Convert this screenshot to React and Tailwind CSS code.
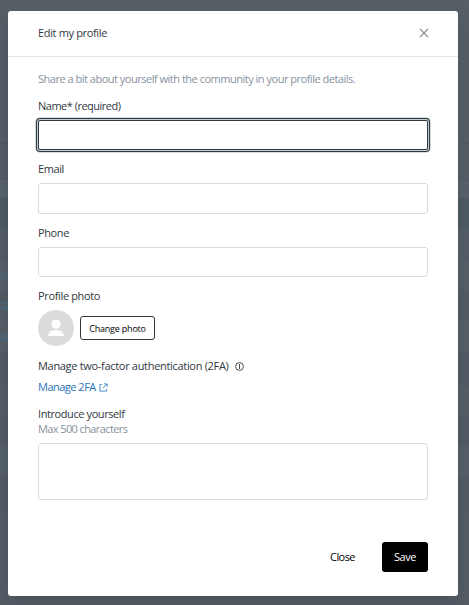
const FONT = "font-['Open_Sans','Noto_Sans',sans-serif]";

// Rows of the page that stay visible behind the dimmed overlay.
const rows = [
  { h: 'h-[143px]', c: 'bg-[#565e66]' },
  { h: 'h-9', c: 'bg-[#565e66] border-t border-[#50585f]' },
  { h: 'h-[19px]', c: 'bg-[#58616a] border-t border-[#4f5961]' },
  { h: 'h-[30px]', c: 'bg-[#4e5a62]' },
  { h: 'h-[31px]', c: 'bg-[#545d66]' },
  { h: 'h-[31px]', c: 'bg-[#575f67] border-t border-[#505a63]', t: 'ra' },
  { h: 'h-[31px]', c: 'bg-[#535c64]', t: 'at' },
  { h: 'h-8', c: 'bg-[#575f67]', t: 'at' },
  { h: 'h-[31px]', c: 'bg-[#525b64]' },
  { h: 'h-[31px]', c: 'bg-[#565e66] border-t border-[#505a62]' },
  { h: 'h-[31px]', c: 'bg-[#525b64]' },
  { h: 'h-[31px]', c: 'bg-[#565f67]' },
  { h: 'h-[31px]', c: 'bg-[#525b63]' },
  { h: 'h-[97px]', c: 'bg-[#545c64]' },
];

function Label({ children, className = '' }) {
  return <div className={`h-4 whitespace-nowrap text-[11px] leading-4 text-[#2f3941] ${className}`}>{children}</div>;
}

export default function App() {
  return (
    <div className={`relative h-[605px] w-[469px] overflow-hidden ${FONT}`}>
      <div className="flex flex-col">
        {rows.map((r, i) => (
          <div key={i} className={`${r.h} ${r.c} flex items-center`}>
            {r.t && <span className="text-[12px] leading-4 tracking-[-1.5px] text-[#4a6b85]">{r.t}</span>}
          </div>
        ))}
      </div>

      <section className="absolute top-[11px] left-2 flex h-[585px] w-[450px] flex-col rounded-[3px] bg-white shadow-[0_8px_16px_rgba(23,35,45,0.15)]">
        <header className="flex h-[46px] shrink-0 items-center justify-between border-b border-[#e4e6e7] pr-[29px] pb-px pl-[30px]">
          <h1 className="text-[11px] leading-4 tracking-[-0.35px] text-[#2f3941]">Edit my profile</h1>
          <svg className="size-[10px]" viewBox="0 0 10 10" fill="none" stroke="#87929d" strokeWidth="1.1">
            <path d="M1 1l8 8M9 1l-8 8" />
          </svg>
        </header>

        <div className="flex flex-col px-[30px] pt-[14px]">
          <p className="h-4 text-[11px] leading-4 tracking-[-0.49px] whitespace-nowrap text-[#87929d]">
            Share a bit about yourself with the community in your profile details.
          </p>
          <Label className="mt-[11px] tracking-[-0.5px]">Name* (required)</Label>
          <input className="mt-[6px] h-[30px] rounded-[2px] border border-[#2f3941] px-2 text-[11px] shadow-[0_0_0_1px_#c5ced0,0_0_0_2px_#2f3941,0_0_0_3px_#d5dede] outline-none" />
          <Label className="mt-[11px] tracking-[-0.4px]">Email</Label>
          <input className="mt-[6px] h-[31px] rounded-[3px] border border-[#d8dcde] px-2 text-[11px] outline-none" />
          <Label className="mt-[11px] tracking-[-0.4px]">Phone</Label>
          <input className="mt-[6px] h-[30px] rounded-[3px] border border-[#d8dcde] px-2 text-[11px] outline-none" />
          <Label className="mt-[11px] tracking-[-0.35px]">Profile photo</Label>
          <div className="mt-[6px] flex h-9 items-center gap-[6px]">
            <svg className="size-9" viewBox="0 0 36 36">
              <circle cx="18" cy="18" r="18" fill="#dcdcdc" />
              <circle cx="18" cy="14.2" r="4.6" fill="#fff" />
              <path d="M10 26c.4-4 3.7-6 8-6s7.6 2 8 6z" fill="#fff" />
            </svg>
            <button className="h-6 w-[75px] rounded-[3px] border border-[#2f3941] text-[9px] leading-[23px] tracking-[-0.2px] whitespace-nowrap text-black">
              Change photo
            </button>
          </div>
          <div className="mt-3 flex items-center gap-[6px]">
            <Label className="tracking-[-0.31px]">Manage two-factor authentication (2FA)</Label>
            <svg className="size-[9px]" viewBox="0 0 9 9" fill="none" stroke="#2f3941" strokeWidth="0.9">
              <circle cx="4.5" cy="4.5" r="3.9" />
              <path d="M4.5 2v5" />
            </svg>
          </div>
          <a className="mt-[5px] flex h-4 items-center gap-[3px] text-[11px] leading-4 text-[#1f73b7]">
            <span className="tracking-[-0.5px]">Manage 2FA</span>
            <svg className="size-[9px]" viewBox="0 0 9 9" fill="none" stroke="#1f73b7" strokeWidth="0.8">
              <path d="M3 1.4H.9v6.7h6.7V6M5 .9h3.1V4M8 1L3.8 5.2" />
            </svg>
          </a>
          <Label className="mt-[11px] tracking-[-0.41px]">Introduce yourself</Label>
          <div className="-mt-px h-4 text-[11px] leading-4 tracking-[-0.6px] text-[#87929d]">Max 500 characters</div>
          <textarea className="mt-[6px] h-[57px] resize-none rounded-[3px] border border-[#d8dcde] px-2 text-[11px] outline-none" />
        </div>

        <footer className="mt-auto mb-6 flex items-center justify-end gap-[27px] pr-[30px]">
          <button className="text-[11px] leading-4 tracking-[-0.55px] text-black">Close</button>
          <button className="h-[30px] w-[46px] rounded-[3px] bg-black text-[11px] leading-[30px] tracking-[-0.5px] text-white">Save</button>
        </footer>
      </section>
    </div>
  );
}
